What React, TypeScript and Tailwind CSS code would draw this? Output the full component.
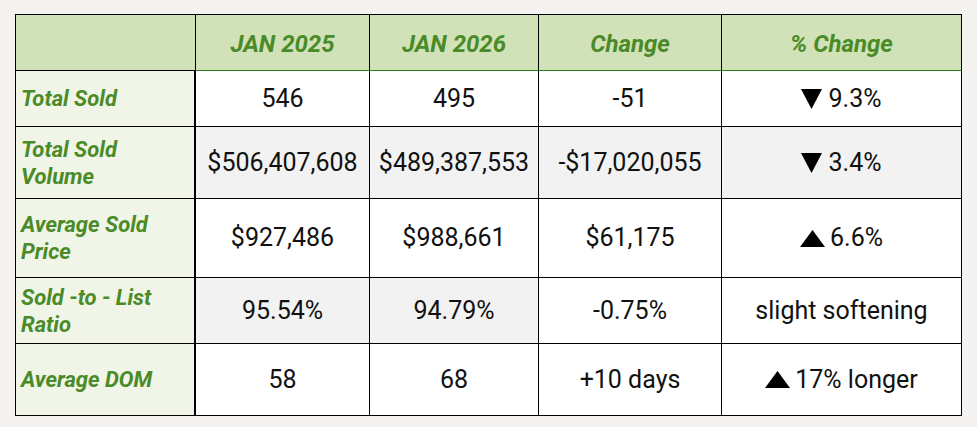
import React from "react";

type Arrow = "up" | "down" | null;

const Tri = ({ dir }: { dir: "up" | "down" }) =>
  dir === "up" ? (
    <svg width="25" height="17" viewBox="0 0 25 17" className="mr-[5px] shrink-0">
      <polygon points="12.5,0 25,17 0,17" fill="#000" />
    </svg>
  ) : (
    <svg width="21" height="20" viewBox="0 0 21 20" className="mr-[6px] shrink-0 mt-[1px]">
      <polygon points="0,0 21,0 10.5,20" fill="#000" />
    </svg>
  );

const rows: {
  label: string[];
  h: string;
  vals: string[];
  gray: boolean[];
  arrow: Arrow;
  pct: string;
}[] = [
  {
    label: ["Total Sold"],
    h: "h-[56px]",
    vals: ["546", "495", "-51"],
    gray: [false, false, false, false],
    arrow: "down",
    pct: "9.3%",
  },
  {
    label: ["Total Sold", "Volume"],
    h: "h-[72px]",
    vals: ["$506,407,608", "$489,387,553", "-$17,020,055"],
    gray: [true, true, true, true],
    arrow: "down",
    pct: "3.4%",
  },
  {
    label: ["Average Sold", "Price"],
    h: "h-[79px]",
    vals: ["$927,486", "$988,661", "$61,175"],
    gray: [false, false, false, false],
    arrow: "up",
    pct: "6.6%",
  },
  {
    label: ["Sold -to - List", "Ratio"],
    h: "h-[66px]",
    vals: ["95.54%", "94.79%", "-0.75%"],
    gray: [true, true, false, false],
    arrow: null,
    pct: "slight softening",
  },
  {
    label: ["Average DOM"],
    h: "h-[72px]",
    vals: ["58", "68", "+10 days"],
    gray: [false, false, false, false],
    arrow: "up",
    pct: "17% longer",
  },
];

const widths = ["w-[174px]", "w-[169px]", "w-[183px]", "w-[240px]"];

export default function App() {
  return (
    <div
      className="w-[977px] h-[427px] bg-[#f4f3f1] pt-[14px] pl-[15px]"
      style={{ fontFamily: "Roboto, 'Liberation Sans', sans-serif" }}
    >
      <div className="inline-flex flex-col border-t border-l border-black">
        {/* header */}
        <div className="flex h-[56px] bg-[#d1e2b8]">
          <div className="w-[180px] border-r border-b border-black" />
          {["JAN 2025", "JAN 2026", "Change", "% Change"].map((t, i) => (
            <div
              key={t}
              className={`${widths[i]} border-r border-r-black border-b border-b-[#2a7d1c] flex items-center justify-center pt-[3px] text-[24px] font-bold italic text-[#4a8b28]`}
            >
              {t}
            </div>
          ))}
        </div>
        {rows.map((r, ri) => (
          <div key={ri} className={`flex ${r.h}`}>
            <div className="w-[180px] bg-[#f1f5e8] border-r-2 border-b border-black flex flex-col justify-center pl-[5px] text-[22px] leading-[27px] font-bold italic text-[#4a8b28]">
              {r.label.map((l) => (
                <span key={l}>{l}</span>
              ))}
            </div>
            {r.vals.map((v, vi) => (
              <div
                key={vi}
                className={`${widths[vi]} ${r.gray[vi] ? "bg-[#f2f2f2]" : "bg-white"} border-r border-b border-black flex items-center justify-center text-[25px] text-[#111]`}
              >
                {v}
              </div>
            ))}
            <div
              className={`${widths[3]} ${r.gray[3] ? "bg-[#f2f2f2]" : "bg-white"} border-r border-b border-black flex items-center justify-center text-[25px] text-[#111]`}
            >
              {r.arrow && <Tri dir={r.arrow} />}
              <span>{r.pct}</span>
            </div>
          </div>
        ))}
      </div>
    </div>
  );
}
